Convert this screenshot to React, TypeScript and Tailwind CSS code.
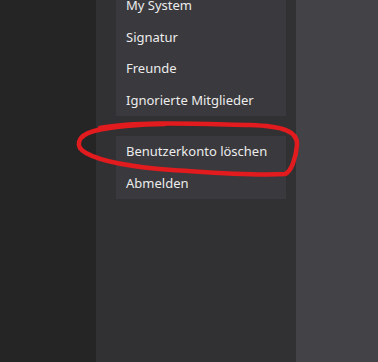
import React from 'react';

const mainItems = ['My System', 'Signatur', 'Freunde', 'Ignorierte Mitglieder'];
const accountItems = ['Benutzerkonto löschen', 'Abmelden'];

const MenuItem: React.FC<{ label: string }> = ({ label }) => (
    <div className="h-[31.5px] flex items-center pl-[10px] text-[13px] text-[#ececec] whitespace-nowrap">
        {label}
    </div>
);

const App: React.FC = () => {
    return (
        <div className="relative w-[378px] h-[362px] overflow-hidden flex bg-[#252526] font-['Segoe_UI','Noto_Sans',sans-serif]">
            <div className="w-[96px] shrink-0" />
            <div className="w-[200px] shrink-0 bg-[#313133] pl-[20px] pr-[10px]">
                <div className="-mt-[10px] flex flex-col gap-[20px]">
                    <div className="bg-[#3a393d]">
                        {mainItems.map((item) => (
                            <MenuItem key={item} label={item} />
                        ))}
                    </div>
                    <div className="bg-[#3a393d]">
                        {accountItems.map((item) => (
                            <MenuItem key={item} label={item} />
                        ))}
                    </div>
                </div>
            </div>
            <div className="flex-1 bg-[#434246]" />

            {/* red marker scribble */}
            <svg className="absolute inset-0 pointer-events-none" width="378" height="362" viewBox="0 0 378 362">
                <path
                    d="M 100 128 C 140 121, 200 124, 250 125 C 282 126, 298 131, 297 145 C 296 158, 291 172, 285 174 C 250 176, 205 172, 172 170 C 132 167, 102 162, 86 153 C 75 147, 76 136, 94 131 C 110 127, 140 124, 165 124"
                    fill="none"
                    stroke="#e21b1e"
                    strokeWidth="4.5"
                    strokeLinecap="round"
                    strokeLinejoin="round"
                />
            </svg>
        </div>
    );
};

export default App;
